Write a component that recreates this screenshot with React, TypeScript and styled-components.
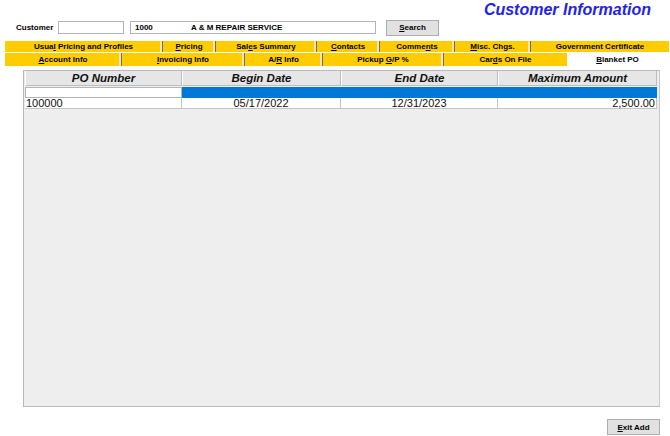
import React from "react";
import styled, { createGlobalStyle } from "styled-components";

const Global = createGlobalStyle`
  html, body { margin: 0; padding: 0; background: #ffffff; }
  body { font-family: "Liberation Sans", Arial, sans-serif; }
`;

const Page = styled.div`
  width: 670px;
  height: 436px;
  display: flex;
  flex-direction: column;
  overflow: hidden;
  background: #ffffff;
`;

const TitleRow = styled.div`
  height: 19px;
  display: flex;
  justify-content: flex-end;
  align-items: flex-start;
  padding-right: 19px;
`;

const Title = styled.h1`
  margin: 0;
  font-family: "Liberation Sans", Arial, sans-serif;
  font-size: 16px;
  line-height: 19px;
  font-weight: bold;
  font-style: italic;
  color: #2323e6;
`;

const CustomerRow = styled.div`
  height: 17px;
  display: flex;
  align-items: center;
  padding-left: 16px;
`;

const Label = styled.span`
  font-size: 8px;
  font-weight: bold;
  color: #000;
  width: 42px;
`;

const Field = styled.div<{ $w: number }>`
  width: ${(p) => p.$w}px;
  height: 13px;
  box-sizing: border-box;
  border: 1px solid #b4b4b4;
  background: #fff;
  display: flex;
  align-items: center;
  font-size: 8px;
  font-weight: bold;
  color: #000;
  margin-right: 6px;
`;

const Code = styled.span`
  width: 56px;
  padding-left: 4px;
`;

const Button = styled.button`
  height: 16px;
  width: 53px;
  box-sizing: border-box;
  border: 1px solid #adadad;
  background: #e1e1e1;
  font-family: "Liberation Sans", Arial, sans-serif;
  font-size: 8px;
  font-weight: bold;
  color: #000;
  padding: 0;
  cursor: default;
`;

const SearchButton = styled(Button)`
  margin-left: 4px;
`;

const Tabs = styled.div`
  margin-top: 5px;
  margin-left: 5px;
  display: flex;
  flex-direction: column;
  gap: 1px;
`;

const TabRow = styled.div<{ $h: number }>`
  display: flex;
  height: ${(p) => p.$h}px;
`;

const Tab = styled.div<{ $w: number; $active?: boolean; $last?: boolean }>`
  width: ${(p) => p.$w}px;
  box-sizing: border-box;
  background: ${(p) => (p.$active ? "#ffffff" : "#ffcc00")};
  border-right: ${(p) => (p.$last ? "none" : "1px solid #6e6e6e")};
  box-shadow: ${(p) => (p.$last ? "none" : "inset -2px 0 0 #f3e7b5")};
  display: flex;
  align-items: center;
  justify-content: center;
  font-size: 8px;
  font-weight: bold;
  color: #000;
  white-space: pre;
`;

const TabText = styled.span`
  white-space: pre;
  u {
    text-decoration: underline;
  }
`;

const Grid = styled.div`
  margin-top: 4px;
  margin-left: 23px;
  width: 637px;
  height: 337px;
  box-sizing: border-box;
  border: 1px solid #b9b9b9;
  border-right-color: #c8c8c8;
  background: #eeeeee;
  padding: 0 2px 0 1px;
  display: flex;
  flex-direction: column;
`;

const GridRow = styled.div`
  display: grid;
  grid-template-columns: 157px 159px 157px 159px;
`;

const HeadCell = styled.div`
  height: 15px;
  box-sizing: border-box;
  background: #e6e6e6;
  border-right: 1px solid #bdbdbd;
  border-bottom: 1px solid #bdbdbd;
  border-left: 1px solid #ffffff;
  display: flex;
  align-items: center;
  justify-content: center;
  font-family: "Liberation Sans", Arial, sans-serif;
  font-size: 11.5px;
  font-weight: bold;
  font-style: italic;
  color: #111;
`;

const NewCell = styled.div<{ $blue?: boolean }>`
  height: 11px;
  margin-top: 1px;
  box-sizing: border-box;
  background: ${(p) => (p.$blue ? "#0078d7" : "#ffffff")};
  border: ${(p) => (p.$blue ? "none" : "1px solid #b5b5b5")};
`;

const DataCell = styled.div<{ $align: string }>`
  height: 11px;
  box-sizing: border-box;
  background: #ffffff;
  border-right: 1px solid #c4c4c4;
  border-bottom: 1px solid #c4c4c4;
  display: flex;
  align-items: center;
  justify-content: ${(p) => p.$align};
  font-family: "Liberation Sans", Arial, sans-serif;
  font-size: 11px;
  color: #111;
  padding: 0 1px;
  line-height: 11px;
`;

const Footer = styled.div`
  margin-top: 12px;
  padding-right: 10px;
  display: flex;
  justify-content: flex-end;
`;

const row1 = [
  { w: 158, label: <>Usua<u>l</u> Pricing and Profiles</> },
  { w: 53, label: <><u>P</u>ricing</> },
  { w: 101, label: <>Sal<u>e</u>s Summary</> },
  { w: 63, label: <><u>C</u>ontacts</> },
  { w: 75, label: <>Comme<u>n</u>ts</> },
  { w: 76, label: <><u>M</u>isc. Chgs.</> },
  { w: 138, label: <>Government Certificate</> },
];

const row2 = [
  { w: 117, label: <><u>A</u>ccount Info</> },
  { w: 123, label: <><u>I</u>nvoicing Info</> },
  { w: 78, label: <>A/<u>R</u> Info</> },
  { w: 121, label: <>Pickup <u>G</u>/P %</> },
  { w: 123, label: <>Car<u>d</u>s On File</> },
  { w: 101, label: <><u>B</u>lanket PO</>, active: true },
];

export default function App() {
  return (
    <Page>
      <Global />
      <TitleRow>
        <Title>Customer Information</Title>
      </TitleRow>
      <CustomerRow>
        <Label>Customer</Label>
        <Field $w={66} />
        <Field $w={246}>
          <Code>1000</Code>
          <span>A &amp; M REPAIR SERVICE</span>
        </Field>
        <SearchButton>
          <u>S</u>earch
        </SearchButton>
      </CustomerRow>
      <Tabs>
        <TabRow $h={11}>
          {row1.map((t, i) => (
            <Tab key={i} $w={t.w} $last={i === row1.length - 1}>
              <TabText>{t.label}</TabText>
            </Tab>
          ))}
        </TabRow>
        <TabRow $h={13}>
          {row2.map((t, i) => (
            <Tab key={i} $w={t.w} $active={t.active} $last={i >= row2.length - 2}>
              <TabText>{t.label}</TabText>
            </Tab>
          ))}
        </TabRow>
      </Tabs>
      <Grid>
        <GridRow>
          <HeadCell>PO Number</HeadCell>
          <HeadCell>Begin Date</HeadCell>
          <HeadCell>End Date</HeadCell>
          <HeadCell>Maximum Amount</HeadCell>
        </GridRow>
        <GridRow>
          <NewCell />
          <NewCell $blue />
          <NewCell $blue />
          <NewCell $blue />
        </GridRow>
        <GridRow>
          <DataCell $align="flex-start">100000</DataCell>
          <DataCell $align="center">05/17/2022</DataCell>
          <DataCell $align="center">12/31/2023</DataCell>
          <DataCell $align="flex-end">2,500.00</DataCell>
        </GridRow>
      </Grid>
      <Footer>
        <Button>
          <u>E</u>xit Add
        </Button>
      </Footer>
    </Page>
  );
}
